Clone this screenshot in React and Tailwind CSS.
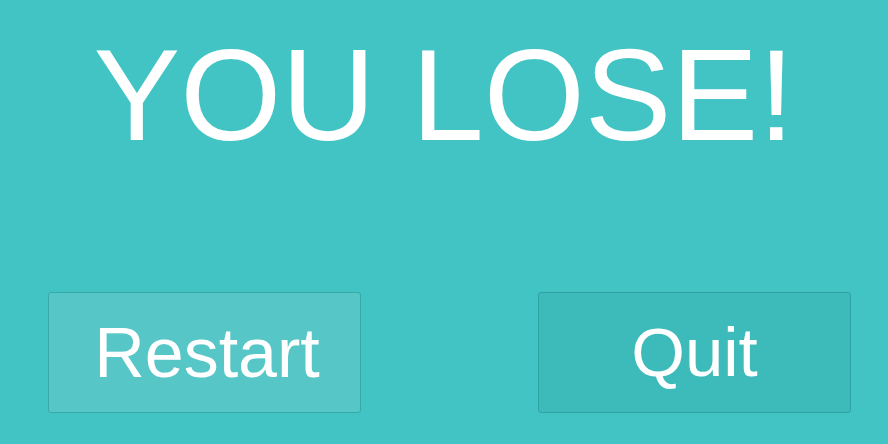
export default function App() {
  return (
    <div className="w-[888px] h-[444px] bg-[#43c4c4] flex flex-col overflow-hidden font-['Liberation_Sans',Arial,sans-serif] text-white">
      {/* Title */}
      <div className="pt-[30px] text-center">
        <h1 className="text-[130px] leading-none font-normal">YOU LOSE!</h1>
      </div>

      {/* Buttons */}
      <div className="mt-[132px] flex justify-between pl-[48px] pr-[37px]">
        <button className="w-[313px] h-[121px] pl-[5px] rounded-[3px] border border-[#36a9a9] bg-[#57c6c6] text-[70px] leading-none text-white">
          Restart
        </button>
        <button className="w-[313px] h-[121px] rounded-[3px] border border-[#2fa3a3] bg-[#3dbaba] text-[69px] leading-none text-white">
          Quit
        </button>
      </div>
    </div>
  );
}
